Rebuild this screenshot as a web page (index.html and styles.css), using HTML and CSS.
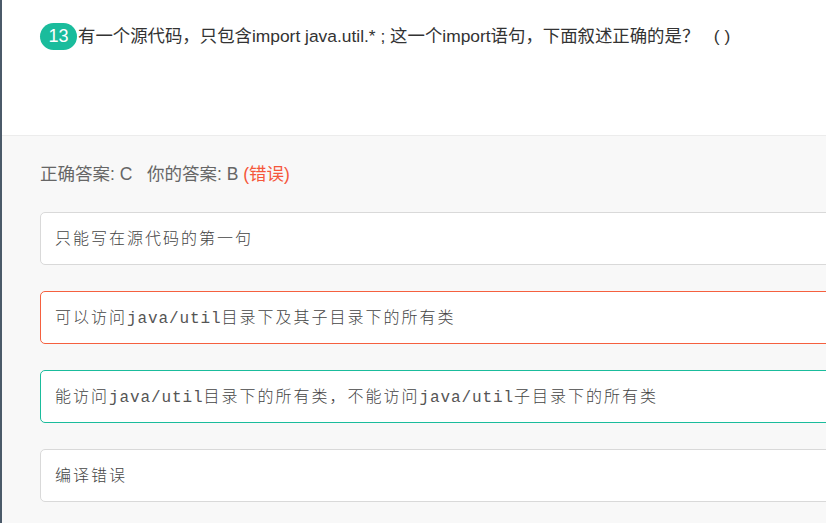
FILE: index.html
```html
<!DOCTYPE html>
<html lang="zh-CN">
<head>
  <meta charset="UTF-8" />
  <title>题目解析</title>
  <meta name="viewport" content="width=device-width, initial-scale=1.0" />
  <link rel="stylesheet" href="styles.css">
</head>
<body>

<div class="page">
  <!-- 题干 -->
  <div class="question">
    <span class="num">13</span>
    <span class="title">有一个源代码，只包含import java.util.* ; 这一个import语句，下面叙述正确的是？&nbsp;&nbsp;&nbsp;( )</span>
  </div>

  <!-- 答案与选项 -->
  <div class="answer">
    <div class="result">
      正确答案: C&nbsp;&nbsp;&nbsp;你的答案: B <span class="wrong">(错误)</span>
    </div>

    <ul class="options">
      <li class="option">只能写在源代码的第一句</li>
      <li class="option mine">可以访问<code>java/util</code>目录下及其子目录下的所有类</li>
      <li class="option right">能访问<code>java/util</code>目录下的所有类，不能访问<code>java/util</code>子目录下的所有类</li>
      <li class="option">编译错误</li>
    </ul>
  </div>
</div>

</body>
</html>
```

FILE: styles.css
```css
* { box-sizing: border-box; }
body {
  margin: 0;
  overflow: hidden;
  font-family: 'Liberation Sans', 'Noto Sans CJK SC', sans-serif;
  background: #f8f8f8;
}
.page {
  border-left: 2px solid #4b5a69;
  min-height: 100vh;
  width: 1000px;
}
.question {
  background: #fff;
  height: 136px;
  padding: 23px 0 0 38px;
  border-bottom: 1px solid #ececec;
  display: flex;
  align-items: flex-start;
}
.num {
  display: inline-block;
  height: 27px;
  min-width: 37px;
  padding: 0 6px;
  border-radius: 14px;
  background: #1abc9c;
  color: #fff;
  font-size: 18px;
  line-height: 27px;
  text-align: center;
}
.title {
  margin-left: 1px;
  color: #333;
  font-size: 17.4px;
  line-height: 26px;
}
.answer {
  padding: 26px 0 0 38px;
}
.result {
  color: #666;
  font-size: 17.5px;
  line-height: 24px;
}
.wrong {
  color: #f5573b;
}
.options {
  list-style: none;
  margin: 26px 0 0;
  padding: 0;
}
.option {
  height: 53px;
  margin-bottom: 26px;
  padding: 0 14px 2px;
  background: #fff;
  border: 1px solid #d9d9d9;
  border-radius: 5px;
  color: #444;
  font-family: 'Noto Sans CJK SC', monospace;
  font-size: 16px;
  font-weight: 300;
  line-height: 49px;
  letter-spacing: 2px;
}
.option code {
  font-family: 'Liberation Mono', monospace;
  font-size: 16px;
  color: #555;
  letter-spacing: 0.9px;
}
.option.mine {
  border-color: #f5603f;
}
.option.right {
  border-color: #1abc9c;
}
```
